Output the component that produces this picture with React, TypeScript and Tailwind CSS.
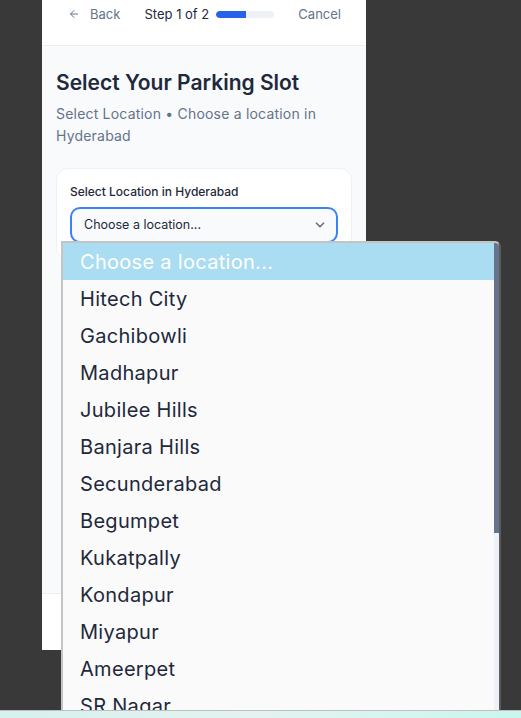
import React from "react";
import { ArrowLeft, ChevronDown } from "lucide-react";

const options = [
  "Hitech City",
  "Gachibowli",
  "Madhapur",
  "Jubilee Hills",
  "Banjara Hills",
  "Secunderabad",
  "Begumpet",
  "Kukatpally",
  "Kondapur",
  "Miyapur",
  "Ameerpet",
  "SR Nagar",
];

export default function App() {
  return (
    <div className="relative flex h-[718px] w-[521px] flex-col overflow-hidden bg-[#393939] font-['Inter',sans-serif]">
      <div className="ml-[42px] flex h-[650px] w-[324px] flex-col bg-[#f9fafb]">
        <header className="flex h-[46px] items-start justify-between border-b border-[#eceef1] bg-white pl-[26px] pr-[25px] pt-[6px] text-[13px] leading-[16px]">
          <div className="flex items-center gap-[10px] text-[#64748b]">
            <ArrowLeft size={12} strokeWidth={2} />
            <span>Back</span>
          </div>
          <div className="flex items-center gap-[7px]">
            <span className="text-[#1e293b]">Step 1 of 2</span>
            <div className="h-[7px] w-[58px] overflow-hidden rounded-full bg-[#eef2f7]">
              <div className="h-full w-[30px] rounded-l-full bg-[#2563eb]" />
            </div>
          </div>
          <span className="text-[#64748b]">Cancel</span>
        </header>
        <main className="flex-1 px-[14px] pt-[22px]">
          <h1 className="text-[21px] font-semibold leading-[30px] text-[#1e293b]">
            Select Your Parking Slot
          </h1>
          <p className="mt-[5px] w-[285px] text-[14px] leading-[22px] tracking-[0.2px] text-[#64748b]">
            Select Location • Choose a location in Hyderabad
          </p>
          <div className="mt-[21px] rounded-[12px] border border-[#eef0f4] bg-white px-[13px] pt-[14px] pb-[16px]">
            <label className="block text-[12px] font-medium leading-[18px] text-[#1e293b]">
              Select Location in Hyderabad
            </label>
            <div className="mt-[6px] flex h-[36px] items-center justify-between rounded-[10px] border-2 border-[#3b82f6] bg-[#f9fafb] pl-[12px] pr-[9px] text-[12.5px] text-[#1e293b]">
              <span>Choose a location...</span>
              <ChevronDown size={14} strokeWidth={3} className="text-[#6b7280]" />
            </div>
          </div>
        </main>
        <footer className="h-[57px] border-t border-[#eceef1] bg-white" />
      </div>

      <div className="mt-auto h-[8px] w-full border-t border-[#bfbfbf] bg-gradient-to-r from-[#d6f1ee] via-[#e3f3f1] to-[#c9f6ef]" />

      <div className="absolute left-[61px] top-[241px] flex h-[469px] w-[440px] overflow-hidden rounded-tr-[6px] border-l-2 border-t-2 border-r-2 border-[#c4c4c4] border-r-[#5b5b5b] bg-[#fafafa]">
        <div className="flex-1 overflow-hidden">
          <div className="flex h-[37px] items-center bg-[#aadcf2] pl-[17px] text-[20px] tracking-[0.3px] text-white">
            Choose a location...
          </div>
          {options.map((o) => (
            <div
              key={o}
              className="flex h-[37px] items-center pl-[17px] text-[20px] tracking-[0.3px] text-[#1e293b]"
            >
              {o}
            </div>
          ))}
        </div>
        <div className="w-[5px] bg-[#eef2f8]">
          <div className="h-[290px] bg-[#64748b]" />
        </div>
      </div>
    </div>
  );
}
